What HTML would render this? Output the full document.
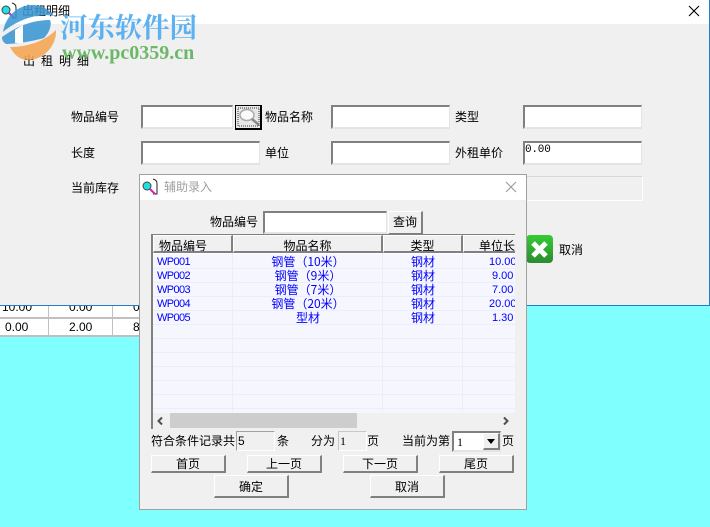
<!DOCTYPE html>
<html><head><meta charset="utf-8"><style>
html,body{margin:0;padding:0}
body{width:710px;height:527px;position:relative;overflow:hidden;background:#80ffff;font:12px/14px "WenQuanYi Zen Hei","Noto Sans CJK SC",sans-serif;color:#000}
div,span{position:absolute;box-sizing:border-box}
.t{white-space:nowrap}
.i{background:#fff;border-top:2px solid #808080;border-left:2px solid #808080;border-right:1px solid #e4e4e4;border-bottom:2px solid #e4e4e4}
.b{background:#f0f0f0;border-top:1px solid #fff;border-left:1px solid #fff;border-right:2px solid #808080;border-bottom:2px solid #808080;text-align:center}
.h{background:#f0f0f0;border-top:1px solid #fff;border-left:1px solid #fff;border-right:2px solid #808080;border-bottom:2px solid #808080;height:18px;top:235px;text-align:center;line-height:20px;overflow:hidden;white-space:nowrap}
.r{color:#0000ff;white-space:nowrap}
.w{font:11px/14px 'Liberation Sans',sans-serif;letter-spacing:-.6px}
.n{font:11px/14px 'Liberation Sans',sans-serif}
.c{text-align:center}
.l{font:12px/14px 'Liberation Sans',sans-serif}
</style></head><body>
<!-- main window -->
<div style="left:0;top:0;width:710px;height:306px;background:#f0f0f0;border-right:1px solid #1e7fd0;border-bottom:1px solid #1e7fd0"></div>
<div style="left:0;top:0;width:709px;height:24px;background:#fff"></div>
<svg style="position:absolute;left:1px;top:2px" width="18" height="18" viewBox="0 0 18 18"><path d="M11 1c3 1 4 2 4 5v10h-4" fill="none" stroke="#222"/><circle cx="5" cy="8" r="4" fill="#20e0e0" stroke="#444"/><path d="M8 11l5 5" stroke="#d020c0" stroke-width="2"/></svg>
<div class="t" style="left:22px;top:4px">出租明细</div>
<svg style="position:absolute;left:688px;top:5px" width="12" height="12"><path d="M1 1L11 11M11 1L1 11" stroke="#000" stroke-width="1.1"/></svg>
<div class="t" style="left:23px;top:54px;letter-spacing:6px">出租明细</div>

<div class="t" style="left:71px;top:110px">物品编号</div>
<div class="i" style="left:141px;top:105px;width:92px;height:24px"></div>
<div style="left:235px;top:105px;width:27px;height:25px;background:#e8e8e8;border:1px solid #000;border-right:2px solid #000;border-bottom:2px solid #000"></div>
<svg style="position:absolute;left:237px;top:107px" width="24" height="22"><rect x="1" y="1" width="21" height="18" fill="none" stroke="#333" stroke-dasharray="1 1"/><ellipse cx="10" cy="8" rx="7" ry="5.5" fill="#fafafa" stroke="#aaa" stroke-width="1.5"/><path d="M15 12l7 6" stroke="#888" stroke-width="2.5"/></svg>
<div class="t" style="left:265px;top:110px">物品名称</div>
<div class="i" style="left:331px;top:105px;width:119px;height:24px"></div>
<div class="t" style="left:455px;top:110px">类型</div>
<div class="i" style="left:523px;top:105px;width:119px;height:24px"></div>

<div class="t" style="left:71px;top:146px">长度</div>
<div class="i" style="left:141px;top:141px;width:119px;height:24px"></div>
<div class="t" style="left:265px;top:146px">单位</div>
<div class="i" style="left:331px;top:141px;width:119px;height:24px"></div>
<div class="t" style="left:455px;top:146px">外租单价</div>
<div class="i" style="left:523px;top:141px;width:119px;height:24px"></div>
<div class="t" style="left:525px;top:143px;font:11px/14px 'Liberation Mono',monospace;letter-spacing:-.2px">0.00</div>

<div class="t" style="left:71px;top:181px">当前库存</div>
<div style="left:523px;top:176px;width:120px;height:25px;border:1px solid #d8d8d8;border-right-color:#fff;border-bottom-color:#fff"></div>

<div style="left:526px;top:235px;width:27px;height:28px;border-radius:4px;background:linear-gradient(#35cc35,#2d8a30)"></div>
<svg style="position:absolute;left:526px;top:235px" width="27" height="28"><path d="M7 8L20 21M20 8L7 21" stroke="#fff" stroke-width="5"/></svg>
<div class="t" style="left:559px;top:243px">取消</div>

<!-- background table -->
<div style="left:0;top:306px;width:139px;height:31px;background:#fff;border-bottom:2px solid #c0c0c0;overflow:hidden">
<div style="left:0;top:11px;width:139px;height:2px;background:#c0c0c0"></div>
<div style="left:48px;top:0;width:1px;height:31px;background:#c0c0c0"></div>
<div style="left:112px;top:0;width:1px;height:31px;background:#c0c0c0"></div>
<div class="t l" style="left:2px;top:-6px">10.00</div>
<div class="t l" style="left:69px;top:-6px">0.00</div>
<div class="t l" style="left:133px;top:-6px">0</div>
<div class="t l" style="left:5px;top:14px">0.00</div>
<div class="t l" style="left:69px;top:14px">2.00</div>
<div class="t l" style="left:133px;top:14px">8</div>
</div>

<!-- watermark -->
<svg style="position:absolute;left:0;top:0;opacity:.88" width="60" height="62" viewBox="0 0 60 62"><path d="M3 32C6 14 20 5 32 5c10 0 18 5 22 11C40 13 20 18 3 32z" fill="#3b97d3"/><path d="M2 37C12 30 28 20 50 20c2 4 0 12-6 18-14 4-30 6-38 6-3-2-4-4-4-7z" fill="#3b97d3"/><path d="M15 43V30l8-5v18z" fill="#fff"/><path d="M10 47c16 0 34-5 46-17 1 15-12 30-28 30-8 0-14-5-18-13z" fill="#f5a651"/></svg>
<div class="t" style="left:60px;top:7px;font:bold 27.4px/36px 'Noto Serif CJK SC',serif;color:#56aef0;opacity:.95">河东软件园</div>
<div class="t" style="left:62px;top:42px;font:bold 20px/22px 'Liberation Serif',serif;color:#6bb868">www.pc0359.cn</div>

<!-- dialog -->
<div style="left:139px;top:174px;width:388px;height:336px;background:#f0f0f0;border:1px solid #a0a0a0"></div>
<div style="left:140px;top:175px;width:386px;height:25px;background:#fff"></div>
<svg style="position:absolute;left:142px;top:178px" width="18" height="18" viewBox="0 0 18 18"><path d="M11 1c3 1 4 2 4 5v10h-4" fill="none" stroke="#222"/><circle cx="5" cy="8" r="4" fill="#20e0e0" stroke="#444"/><path d="M8 11l5 5" stroke="#d020c0" stroke-width="2"/></svg>
<div class="t" style="left:164px;top:180px;color:#a0a0a0">辅助录入</div>
<svg style="position:absolute;left:505px;top:181px" width="12" height="12"><path d="M1 1L11 11M11 1L1 11" stroke="#999" stroke-width="1.1"/></svg>

<div class="t" style="left:210px;top:215px">物品编号</div>
<div class="i" style="left:263px;top:211px;width:124px;height:23px"></div>
<div class="b" style="left:388px;top:211px;width:35px;height:24px;line-height:20px;font-size:12px">查询</div>

<!-- grid -->
<div style="left:151px;top:234px;width:364px;height:195px;background:#f5f6fe;border-left:2px solid #808080;border-top:2px solid #808080;overflow:hidden">
<div style="left:0;top:16px;width:364px;height:2px;background:#fff"></div>
</div>
<div style="left:153px;top:236px;width:362px;height:193px;overflow:hidden">
<div style="left:0;top:19px;width:362px;height:158px;background:
repeating-linear-gradient(to bottom,transparent 0 13px,#ebedf8 13px 14px)"></div>
<div style="left:79px;top:16px;width:1px;height:160px;background:#ebedf8"></div>
<div style="left:229px;top:16px;width:1px;height:160px;background:#ebedf8"></div>
<div style="left:309px;top:16px;width:1px;height:160px;background:#ebedf8"></div>
</div>
<div class="h" style="left:153px;width:80px;text-align:left;padding-left:5px">物品编号</div>
<div class="h" style="left:233px;width:150px">物品名称</div>
<div class="h" style="left:383px;width:80px">类型</div>
<div class="h" style="left:463px;width:52px;text-align:left;padding-left:15px;border-right:0">单位长</div>

<div class="r w" style="left:157px;top:255px">WP001</div>
<div class="r w" style="left:157px;top:269px">WP002</div>
<div class="r w" style="left:157px;top:283px">WP003</div>
<div class="r w" style="left:157px;top:297px">WP004</div>
<div class="r w" style="left:157px;top:311px">WP005</div>

<div class="r c" style="left:233px;width:150px;top:255px">钢管（10米）</div>
<div class="r c" style="left:233px;width:150px;top:269px">钢管（9米）</div>
<div class="r c" style="left:233px;width:150px;top:283px">钢管（7米）</div>
<div class="r c" style="left:233px;width:150px;top:297px">钢管（20米）</div>
<div class="r c" style="left:233px;width:150px;top:311px">型材</div>

<div class="r c" style="left:383px;width:80px;top:255px">钢材</div>
<div class="r c" style="left:383px;width:80px;top:269px">钢材</div>
<div class="r c" style="left:383px;width:80px;top:283px">钢材</div>
<div class="r c" style="left:383px;width:80px;top:297px">钢材</div>
<div class="r c" style="left:383px;width:80px;top:311px">钢材</div>

<div style="left:463px;width:52px;top:255px;height:70px;overflow:hidden">
<div class="r n" style="left:26px;top:0">10.00</div>
<div class="r n" style="left:29px;top:14px">9.00</div>
<div class="r n" style="left:29px;top:28px">7.00</div>
<div class="r n" style="left:26px;top:42px">20.00</div>
<div class="r n" style="left:29px;top:56px">1.30</div>
</div>

<!-- scrollbar -->
<div style="left:153px;top:413px;width:362px;height:16px;background:#f0f0f0"></div>
<div style="left:170px;top:413px;width:187px;height:15px;background:#cdcdcd"></div>
<svg style="position:absolute;left:156px;top:416px" width="10" height="10"><path d="M6 1.5L2.5 5L6 8.5" fill="none" stroke="#505050" stroke-width="2"/></svg>
<svg style="position:absolute;left:501px;top:416px" width="10" height="10"><path d="M3 1.5L6.5 5L3 8.5" fill="none" stroke="#505050" stroke-width="2"/></svg>

<!-- pager -->
<div class="t" style="left:151px;top:434px">符合条件记录共</div>
<div style="left:236px;top:431px;width:39px;height:20px;border-top:1px solid #a0a0a0;border-left:1px solid #a0a0a0;border-right:1px solid #fff;border-bottom:1px solid #fff;padding-left:1px;font:12px/18px 'Liberation Sans',sans-serif">5</div>
<div class="t" style="left:277px;top:434px">条</div>
<div class="t" style="left:311px;top:434px">分为</div>
<div style="left:338px;top:431px;width:29px;height:20px;border-top:1px solid #c8c8c8;border-left:1px solid #c8c8c8;border-right:1px solid #fff;border-bottom:1px solid #fff;padding-left:1px;font:12px/18px 'Liberation Serif',serif">1</div>
<div class="t" style="left:367px;top:434px">页</div>
<div class="t" style="left:402px;top:434px">当前为第</div>
<div class="i" style="left:452px;top:431px;width:49px;height:21px;font:12px/18px 'Liberation Serif',serif;padding-left:3px">1</div>
<div class="b" style="left:483px;top:433px;width:17px;height:17px"></div>
<svg style="position:absolute;left:487px;top:439px" width="9" height="6"><path d="M0 0H8L4 5z" fill="#000"/></svg>
<div class="t" style="left:502px;top:434px">页</div>

<div class="b" style="left:151px;top:455px;width:75px;height:18px;line-height:16px">首页</div>
<div class="b" style="left:247px;top:455px;width:75px;height:18px;line-height:16px">上一页</div>
<div class="b" style="left:343px;top:455px;width:75px;height:18px;line-height:16px">下一页</div>
<div class="b" style="left:439px;top:455px;width:75px;height:18px;line-height:16px">尾页</div>
<div class="b" style="left:214px;top:475px;width:75px;height:23px;line-height:21px">确定</div>
<div class="b" style="left:370px;top:475px;width:75px;height:23px;line-height:21px">取消</div>
</body></html>
